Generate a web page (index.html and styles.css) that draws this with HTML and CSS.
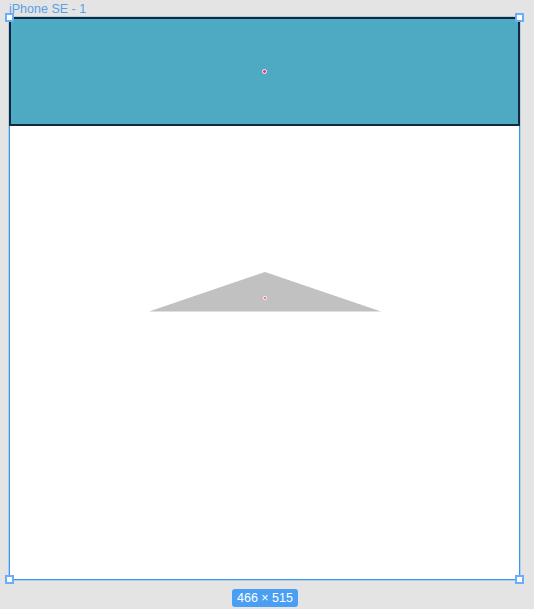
FILE: index.html
```html
<!DOCTYPE html>
<html>
<head>
<meta charset="utf-8">
<link rel="stylesheet" href="styles.css">
</head>
<body>
<div class="canvas">
  <div class="title">iPhone SE - 1</div>
  <div class="artboard">
    <div class="header">
      <span class="dot"></span>
    </div>
    <div class="shape-area">
      <svg class="tri" width="232" height="40" viewBox="0 0 232 40">
        <polygon points="116,0 232,39.5 0,39.5" fill="#c1c1c1"/>
        <circle cx="116" cy="26" r="2.2" fill="#ffffff" stroke="#e0b8c8" stroke-width="0.8"/>
        <circle cx="116" cy="26" r="0.9" fill="#e0307a"/>
      </svg>
    </div>
    <span class="handle tl"></span>
    <span class="handle tr"></span>
    <span class="handle bl"></span>
    <span class="handle br"></span>
  </div>
  <div class="size-row">
    <span class="size">466 × 515</span>
  </div>
</div>
</body>
</html>
```

FILE: styles.css
```css
html, body {
  margin: 0;
  padding: 0;
  background: #e4e4e4;
}
body {
  width: 534px;
  height: 609px;
  overflow: hidden;
  font-family: "Helvetica Neue", "Liberation Sans", Arial, sans-serif;
}
.canvas {
  padding-left: 9px;
  display: flex;
  flex-direction: column;
  width: 511px;
}
.title {
  height: 16px;
  font-size: 12.5px;
  line-height: 16px;
  color: #5a9fe6;
  margin-top: 1px;
  white-space: nowrap;
}
.artboard {
  position: relative;
  width: 511px;
  height: 563px;
  box-sizing: border-box;
  border: 1px solid #3b94f2;
  box-shadow: 0 0 0 1px rgba(90, 160, 240, 0.35);
  background: #ffffff;
  display: flex;
  flex-direction: column;
}
.header {
  height: 109px;
  box-sizing: border-box;
  margin: -1px -1px 0 -1px;
  background: #4ea9c3;
  border: 2px solid #14283e;
  display: flex;
  align-items: center;
  justify-content: center;
}
.dot {
  width: 3px;
  height: 3px;
  border-radius: 50%;
  background: #e43480;
  border: 1px solid #f2f2f2;
}
.shape-area {
  display: flex;
  justify-content: center;
  padding-top: 146px;
}
.tri {
  display: block;
  margin-left: 1px;
}
.handle {
  position: absolute;
  width: 5px;
  height: 5px;
  background: #ffffff;
  border: 2px solid #6aaef5;
}
.tl { left: -5px; top: -5px; }
.tr { right: -5px; top: -5px; }
.bl { left: -5px; bottom: -5px; }
.br { right: -5px; bottom: -5px; }
.size-row {
  display: flex;
  justify-content: center;
  padding-top: 9px;
}
.size {
  background: #4a9ff4;
  color: #ffffff;
  font-size: 12.5px;
  line-height: 18px;
  height: 18px;
  padding: 0 5px;
  border-radius: 3px;
  font-weight: 500;
  margin-left: 1px;
}
```
